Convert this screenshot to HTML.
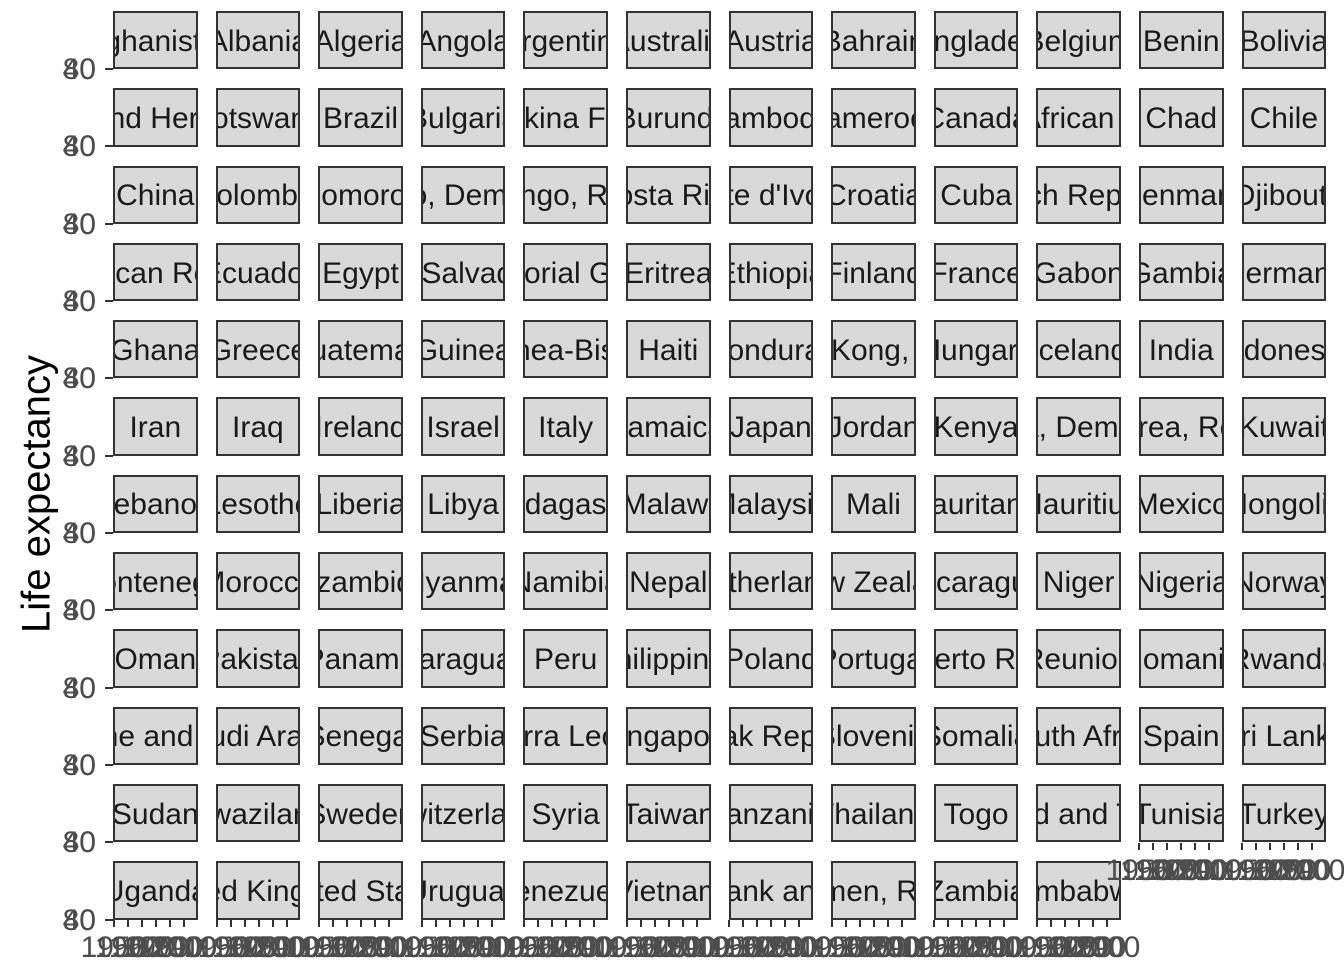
<!DOCTYPE html>
<html><head><meta charset="utf-8">
<style>
body{margin:0;width:1344px;height:960px;background:#fff;position:relative;overflow:hidden;font-family:"Liberation Sans",sans-serif}
.g{position:absolute;left:113px;top:11px;display:grid;grid-template-columns:repeat(12,84.6px);column-gap:18px;grid-auto-rows:58.3px;row-gap:19px}
.g div{box-sizing:border-box;border:2px solid #333;background:#d9d9d9;overflow:hidden;display:flex;justify-content:center;align-items:center;white-space:nowrap;font-size:30px;color:#1a1a1a;padding-top:3px}
.yl{position:absolute;left:36px;width:60px;text-align:right;font-size:30px;color:#4d4d4d;line-height:34px}
.yt{position:absolute;left:105px;width:8px;height:2px;background:#333}
.xt{position:absolute;width:2px;height:7px;background:#333}
.xl{position:absolute;width:90px;text-align:center;font-size:30px;color:#4d4d4d;line-height:34px}
.title{position:absolute;left:37px;top:494px;transform:translate(-50%,-50%) rotate(-90deg);font-size:40px;color:#000;white-space:nowrap}
</style></head><body>
<div class="title">Life expectancy</div>
<div class="g">
<div>Afghanistan</div><div>Albania</div><div>Algeria</div><div>Angola</div><div>Argentina</div><div>Australia</div><div>Austria</div><div>Bahrain</div><div>Bangladesh</div><div>Belgium</div><div>Benin</div><div>Bolivia</div>
<div>Bosnia and Herzegovina</div><div>Botswana</div><div>Brazil</div><div>Bulgaria</div><div>Burkina Faso</div><div>Burundi</div><div>Cambodia</div><div>Cameroon</div><div>Canada</div><div>Central African Republic</div><div>Chad</div><div>Chile</div>
<div>China</div><div>Colombia</div><div>Comoros</div><div>Congo, Dem. Rep.</div><div>Congo, Rep.</div><div>Costa Rica</div><div>Cote d'Ivoire</div><div>Croatia</div><div>Cuba</div><div>Czech Republic</div><div>Denmark</div><div>Djibouti</div>
<div>Dominican Republic</div><div>Ecuador</div><div>Egypt</div><div>El Salvador</div><div>Equatorial Guinea</div><div>Eritrea</div><div>Ethiopia</div><div>Finland</div><div>France</div><div>Gabon</div><div>Gambia</div><div>Germany</div>
<div>Ghana</div><div>Greece</div><div>Guatemala</div><div>Guinea</div><div>Guinea-Bissau</div><div>Haiti</div><div>Honduras</div><div>Hong Kong, China</div><div>Hungary</div><div>Iceland</div><div>India</div><div>Indonesia</div>
<div>Iran</div><div>Iraq</div><div>Ireland</div><div>Israel</div><div>Italy</div><div>Jamaica</div><div>Japan</div><div>Jordan</div><div>Kenya</div><div>Korea, Dem. Rep.</div><div>Korea, Rep.</div><div>Kuwait</div>
<div>Lebanon</div><div>Lesotho</div><div>Liberia</div><div>Libya</div><div>Madagascar</div><div>Malawi</div><div>Malaysia</div><div>Mali</div><div>Mauritania</div><div>Mauritius</div><div>Mexico</div><div>Mongolia</div>
<div>Montenegro</div><div>Morocco</div><div>Mozambique</div><div>Myanmar</div><div>Namibia</div><div>Nepal</div><div>Netherlands</div><div>New Zealand</div><div>Nicaragua</div><div>Niger</div><div>Nigeria</div><div>Norway</div>
<div>Oman</div><div>Pakistan</div><div>Panama</div><div>Paraguay</div><div>Peru</div><div>Philippines</div><div>Poland</div><div>Portugal</div><div>Puerto Rico</div><div>Reunion</div><div>Romania</div><div>Rwanda</div>
<div>Sao Tome and Principe</div><div>Saudi Arabia</div><div>Senegal</div><div>Serbia</div><div>Sierra Leone</div><div>Singapore</div><div>Slovak Republic</div><div>Slovenia</div><div>Somalia</div><div>South Africa</div><div>Spain</div><div>Sri Lanka</div>
<div>Sudan</div><div>Swaziland</div><div>Sweden</div><div>Switzerland</div><div>Syria</div><div>Taiwan</div><div>Tanzania</div><div>Thailand</div><div>Togo</div><div>Trinidad and Tobago</div><div>Tunisia</div><div>Turkey</div>
<div>Uganda</div><div>United Kingdom</div><div>United States</div><div>Uruguay</div><div>Venezuela</div><div>Vietnam</div><div>West Bank and Gaza</div><div>Yemen, Rep.</div><div>Zambia</div><div>Zimbabwe</div>
</div>

<div class="yl" style="top:53px">40</div><div class="yl" style="top:53px">80</div><div class="yt" style="top:68px"></div>
<div class="yl" style="top:130px">40</div><div class="yl" style="top:130px">80</div><div class="yt" style="top:145px"></div>
<div class="yl" style="top:208px">40</div><div class="yl" style="top:208px">80</div><div class="yt" style="top:223px"></div>
<div class="yl" style="top:285px">40</div><div class="yl" style="top:285px">80</div><div class="yt" style="top:300px"></div>
<div class="yl" style="top:362px">40</div><div class="yl" style="top:362px">80</div><div class="yt" style="top:377px"></div>
<div class="yl" style="top:440px">40</div><div class="yl" style="top:440px">80</div><div class="yt" style="top:455px"></div>
<div class="yl" style="top:517px">40</div><div class="yl" style="top:517px">80</div><div class="yt" style="top:532px"></div>
<div class="yl" style="top:594px">40</div><div class="yl" style="top:594px">80</div><div class="yt" style="top:609px"></div>
<div class="yl" style="top:672px">40</div><div class="yl" style="top:672px">80</div><div class="yt" style="top:687px"></div>
<div class="yl" style="top:749px">40</div><div class="yl" style="top:749px">80</div><div class="yt" style="top:764px"></div>
<div class="yl" style="top:826px">40</div><div class="yl" style="top:826px">80</div><div class="yt" style="top:841px"></div>
<div class="yl" style="top:904px">40</div><div class="yl" style="top:904px">80</div><div class="yt" style="top:919px"></div>

<div style="position:absolute;left:0;top:0">
<div class="xt" style="left:113px;top:920px"></div><div class="xt" style="left:127px;top:920px"></div><div class="xt" style="left:141px;top:920px"></div><div class="xt" style="left:155px;top:920px"></div><div class="xt" style="left:169px;top:920px"></div><div class="xt" style="left:183px;top:920px"></div>
<div class="xl" style="left:69px;top:931px">1950</div><div class="xl" style="left:83px;top:931px">1960</div><div class="xl" style="left:97px;top:931px">1970</div><div class="xl" style="left:111px;top:931px">1980</div><div class="xl" style="left:125px;top:931px">1990</div><div class="xl" style="left:139px;top:931px">2000</div>
<div class="xt" style="left:216px;top:920px"></div><div class="xt" style="left:230px;top:920px"></div><div class="xt" style="left:244px;top:920px"></div><div class="xt" style="left:258px;top:920px"></div><div class="xt" style="left:272px;top:920px"></div><div class="xt" style="left:286px;top:920px"></div>
<div class="xl" style="left:172px;top:931px">1950</div><div class="xl" style="left:186px;top:931px">1960</div><div class="xl" style="left:200px;top:931px">1970</div><div class="xl" style="left:214px;top:931px">1980</div><div class="xl" style="left:228px;top:931px">1990</div><div class="xl" style="left:242px;top:931px">2000</div>
<div class="xt" style="left:318px;top:920px"></div><div class="xt" style="left:332px;top:920px"></div><div class="xt" style="left:346px;top:920px"></div><div class="xt" style="left:360px;top:920px"></div><div class="xt" style="left:374px;top:920px"></div><div class="xt" style="left:388px;top:920px"></div>
<div class="xl" style="left:274px;top:931px">1950</div><div class="xl" style="left:288px;top:931px">1960</div><div class="xl" style="left:302px;top:931px">1970</div><div class="xl" style="left:316px;top:931px">1980</div><div class="xl" style="left:330px;top:931px">1990</div><div class="xl" style="left:344px;top:931px">2000</div>
<div class="xt" style="left:421px;top:920px"></div><div class="xt" style="left:435px;top:920px"></div><div class="xt" style="left:449px;top:920px"></div><div class="xt" style="left:463px;top:920px"></div><div class="xt" style="left:477px;top:920px"></div><div class="xt" style="left:491px;top:920px"></div>
<div class="xl" style="left:377px;top:931px">1950</div><div class="xl" style="left:391px;top:931px">1960</div><div class="xl" style="left:405px;top:931px">1970</div><div class="xl" style="left:419px;top:931px">1980</div><div class="xl" style="left:433px;top:931px">1990</div><div class="xl" style="left:447px;top:931px">2000</div>
<div class="xt" style="left:523px;top:920px"></div><div class="xt" style="left:537px;top:920px"></div><div class="xt" style="left:551px;top:920px"></div><div class="xt" style="left:565px;top:920px"></div><div class="xt" style="left:579px;top:920px"></div><div class="xt" style="left:593px;top:920px"></div>
<div class="xl" style="left:479px;top:931px">1950</div><div class="xl" style="left:493px;top:931px">1960</div><div class="xl" style="left:507px;top:931px">1970</div><div class="xl" style="left:521px;top:931px">1980</div><div class="xl" style="left:535px;top:931px">1990</div><div class="xl" style="left:549px;top:931px">2000</div>
<div class="xt" style="left:626px;top:920px"></div><div class="xt" style="left:640px;top:920px"></div><div class="xt" style="left:654px;top:920px"></div><div class="xt" style="left:668px;top:920px"></div><div class="xt" style="left:682px;top:920px"></div><div class="xt" style="left:696px;top:920px"></div>
<div class="xl" style="left:582px;top:931px">1950</div><div class="xl" style="left:596px;top:931px">1960</div><div class="xl" style="left:610px;top:931px">1970</div><div class="xl" style="left:624px;top:931px">1980</div><div class="xl" style="left:638px;top:931px">1990</div><div class="xl" style="left:652px;top:931px">2000</div>
<div class="xt" style="left:728px;top:920px"></div><div class="xt" style="left:742px;top:920px"></div><div class="xt" style="left:756px;top:920px"></div><div class="xt" style="left:770px;top:920px"></div><div class="xt" style="left:784px;top:920px"></div><div class="xt" style="left:798px;top:920px"></div>
<div class="xl" style="left:684px;top:931px">1950</div><div class="xl" style="left:698px;top:931px">1960</div><div class="xl" style="left:712px;top:931px">1970</div><div class="xl" style="left:726px;top:931px">1980</div><div class="xl" style="left:740px;top:931px">1990</div><div class="xl" style="left:754px;top:931px">2000</div>
<div class="xt" style="left:831px;top:920px"></div><div class="xt" style="left:845px;top:920px"></div><div class="xt" style="left:859px;top:920px"></div><div class="xt" style="left:873px;top:920px"></div><div class="xt" style="left:887px;top:920px"></div><div class="xt" style="left:901px;top:920px"></div>
<div class="xl" style="left:787px;top:931px">1950</div><div class="xl" style="left:801px;top:931px">1960</div><div class="xl" style="left:815px;top:931px">1970</div><div class="xl" style="left:829px;top:931px">1980</div><div class="xl" style="left:843px;top:931px">1990</div><div class="xl" style="left:857px;top:931px">2000</div>
<div class="xt" style="left:933px;top:920px"></div><div class="xt" style="left:947px;top:920px"></div><div class="xt" style="left:961px;top:920px"></div><div class="xt" style="left:975px;top:920px"></div><div class="xt" style="left:989px;top:920px"></div><div class="xt" style="left:1003px;top:920px"></div>
<div class="xl" style="left:889px;top:931px">1950</div><div class="xl" style="left:903px;top:931px">1960</div><div class="xl" style="left:917px;top:931px">1970</div><div class="xl" style="left:931px;top:931px">1980</div><div class="xl" style="left:945px;top:931px">1990</div><div class="xl" style="left:959px;top:931px">2000</div>
<div class="xt" style="left:1036px;top:920px"></div><div class="xt" style="left:1050px;top:920px"></div><div class="xt" style="left:1064px;top:920px"></div><div class="xt" style="left:1078px;top:920px"></div><div class="xt" style="left:1092px;top:920px"></div><div class="xt" style="left:1106px;top:920px"></div>
<div class="xl" style="left:992px;top:931px">1950</div><div class="xl" style="left:1006px;top:931px">1960</div><div class="xl" style="left:1020px;top:931px">1970</div><div class="xl" style="left:1034px;top:931px">1980</div><div class="xl" style="left:1048px;top:931px">1990</div><div class="xl" style="left:1062px;top:931px">2000</div>
<div class="xt" style="left:1138px;top:843px"></div><div class="xt" style="left:1152px;top:843px"></div><div class="xt" style="left:1166px;top:843px"></div><div class="xt" style="left:1180px;top:843px"></div><div class="xt" style="left:1194px;top:843px"></div><div class="xt" style="left:1208px;top:843px"></div>
<div class="xl" style="left:1094px;top:854px">1950</div><div class="xl" style="left:1108px;top:854px">1960</div><div class="xl" style="left:1122px;top:854px">1970</div><div class="xl" style="left:1136px;top:854px">1980</div><div class="xl" style="left:1150px;top:854px">1990</div><div class="xl" style="left:1164px;top:854px">2000</div>
<div class="xt" style="left:1241px;top:843px"></div><div class="xt" style="left:1255px;top:843px"></div><div class="xt" style="left:1269px;top:843px"></div><div class="xt" style="left:1283px;top:843px"></div><div class="xt" style="left:1297px;top:843px"></div><div class="xt" style="left:1311px;top:843px"></div>
<div class="xl" style="left:1197px;top:854px">1950</div><div class="xl" style="left:1211px;top:854px">1960</div><div class="xl" style="left:1225px;top:854px">1970</div><div class="xl" style="left:1239px;top:854px">1980</div><div class="xl" style="left:1253px;top:854px">1990</div><div class="xl" style="left:1267px;top:854px">2000</div>
</div>
</body></html>
